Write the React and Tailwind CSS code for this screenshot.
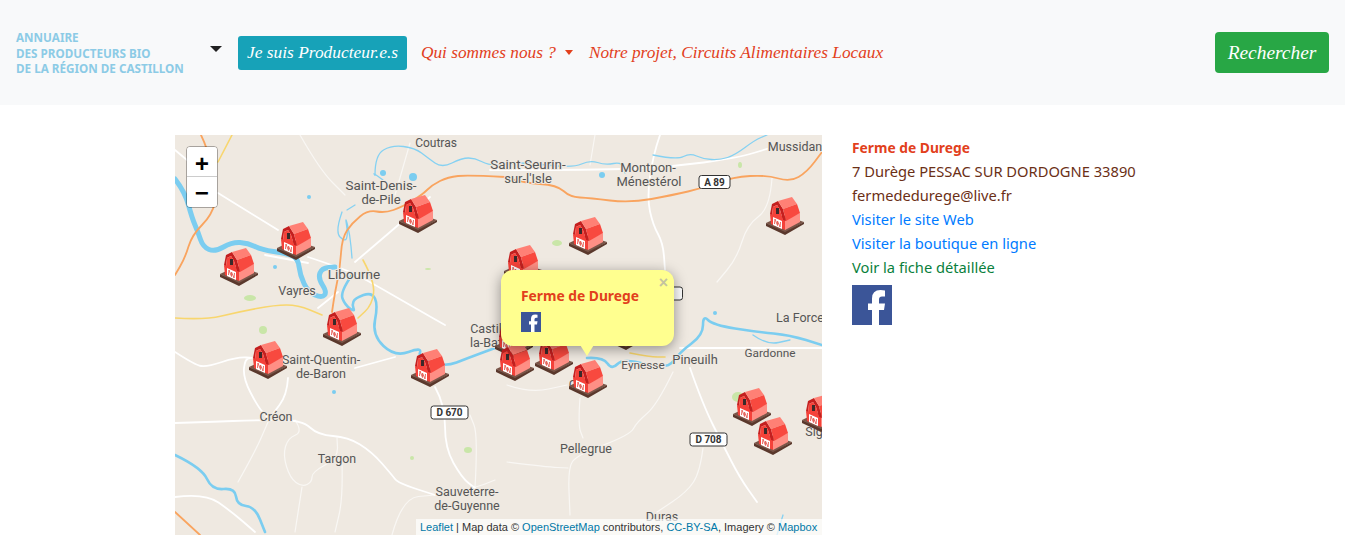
import React from "react";

const scriptFont = { fontFamily: '"Liberation Serif", serif' };

// rounds the corners of the hand-traced polylines
const smooth = (d) =>
  d
    .split("M")
    .filter((part) => part.trim())
    .map((part) => {
      const nums = part.match(/-?\d+(\.\d+)?/g).map(Number);
      const pts = [];
      for (let i = 0; i < nums.length; i += 2) pts.push([nums[i], nums[i + 1]]);
      if (pts.length < 3) return `M${pts[0]} L${pts[pts.length - 1]}`;
      let out = `M${pts[0][0]} ${pts[0][1]}`;
      for (let i = 1; i < pts.length - 1; i++) {
        const mx = (pts[i][0] + pts[i + 1][0]) / 2;
        const my = (pts[i][1] + pts[i + 1][1]) / 2;
        out += ` Q${pts[i][0]} ${pts[i][1]} ${mx} ${my}`;
      }
      const last = pts[pts.length - 1];
      return `${out} L${last[0]} ${last[1]}`;
    })
    .join(" ");

const riversThick = [
  "M0 44 L10 57 L17 83 L23 97 L28 112 L40 117 L57 107 L73 108 L87 115 L110 118 L123 123 L125 140 L133 157 L147 163 L152 157 L143 143 L147 133 L160 132",
];
const rivers = [
  "M177 140 L165 157 L170 170 L180 177 L177 170 L180 163 L197 157 L203 170 L197 200 L220 222 L247 212 L243 223 L270 232 L293 223 L320 213",
  "M412 223 L428 222 L437 235 L448 223 L492 235 L505 217 L528 200 L528 180 L538 190 L582 197 L615 200 L647 210",
  "M0 320 L27 333 L37 355 L60 353 L62 370 L80 372 L90 397",
];
const riversThin = [
  "M200 40 L200 20 L217 10 L240 13 L253 23 L267 33 L287 23 L300 23 L313 30 L330 30 L345 27 L398 33 L415 25 L430 30 L447 27 L450 38",
  "M478 20 L502 25 L515 18 L528 24 L545 25 L560 20 L580 5 L592 0",
  "M167 77 L160 97 L170 107 L173 100 L170 80 L175 100 L177 123",
  "M200 40 L197 37 L208 45 M172 75 L180 70",
  "M608 380 L602 400",
  "M578 200 L592 210 L615 205",
];
const lakes = [[238, 42, 4], [208, 38, 3], [100, 132, 2], [134, 62, 2], [427, 40, 3], [540, 178, 2], [159, 257, 2]];
const greens = [[75, 163, 6, 3], [88, 195, 4, 4], [253, 134, 3, 1], [382, 108, 5, 3], [293, 315, 4, 3], [237, 323, 2, 2], [565, 30, 2, 3], [563, 262, 6, 5]];
const orange = [
  "M26 0 L32 12 L43 55 L37 80 L17 100 L10 123 L0 140",
  "M330 42 L293 40 L273 42 L257 50 L247 60 L227 72 L210 78 L193 75 L177 88 L167 103 L165 133 L160 157 L157 177",
  "M330 42 L348 48 L382 50 L395 62 L415 63 L455 68 L498 60 L528 53 L558 42 L592 40 L615 47 L632 37 L647 17",
  "M0 377 L25 400",
];
const yellow = [
  "M57 0 L43 27",
  "M0 183 L30 185 L63 177 L100 170 L123 170 L147 180",
  "M188 125 L200 147 L197 170 L183 183",
  "M455 218 L475 222 L490 222",
];
const roads = [
  "M43 58 L103 95", "M180 127 L227 87 L255 62", "M133 122 L163 132 L183 140 L247 177 L270 190", "M143 173 L163 157",
  "M315 35 L428 35 L495 32 L562 23 L595 13", "M485 0 L478 20 L472 63 L478 90 L488 108 L490 135",
  "M0 217 L20 230 L32 232 L62 222 L80 223 L70 223 L68 243 L83 272 L93 283", "M113 243 L112 260 L97 280",
  "M0 288 L33 287 L83 285 L127 285 L143 300 L173 302 L197 317 L217 340 L223 348 L260 360",
  "M180 233 L220 222", "M260 252 L270 270 L270 313 L287 343 L300 353", "M0 362 L30 358 L57 377 L80 397",
  "M505 213 L647 213", "M515 233 L528 270 L548 310 L565 343 L582 367", "M0 15 L30 40", "M90 120 L133 128",
];
const roadsThin = [
  "M597 43 L595 73 L572 90 L562 123 L542 147", "M120 285 L128 297 L113 303 L108 320 L115 343 L127 352 L137 347 L137 337 L163 323 L162 303",
  "M127 352 L120 397", "M167 327 L168 363 L160 397", "M63 347 L80 317 L93 287", "M217 400 L227 363 L260 360",
  "M528 313 L525 337 L512 357 L482 377", "M498 237 L482 270 L462 287 L455 300 L402 320 L393 333 L395 380",
  "M405 263 L403 290 L408 303", "M332 327 L372 332 L393 333", "M332 250 L355 258 L392 250", "M260 360 L300 353 L320 345",
  "M300 353 L303 300 L295 280", "M420 0 L415 30", "M235 8 L220 60", "M125 0 L145 35 L170 60",
];
const labels = [
  ["Coutras", 261, 12, 12], ["Saint-Seurin-", 353, 34, 13.4], ["sur-l'Isle", 353, 48, 13], ["Saint-Denis-", 206, 55, 13.4], ["de-Pile", 206, 69, 13],
  ["Montpon-", 473, 37, 13], ["Ménestérol", 474, 51, 13], ["Mussidan", 620, 16, 12.5], ["Libourne", 179, 144, 13.5], ["Vayres", 122, 160, 12.5],
  ["Castil", 311, 198, 12.5], ["la-Bat", 311, 212, 12.5], ["La Force", 625, 187, 12.5], ["Gardonne", 595, 222, 11.8], ["Pineuilh", 520, 229, 12.8],
  ["Eynesse", 468, 234, 11.8], ["Saint-Quentin-", 146, 229, 12.5], ["de-Baron", 146, 243, 12.5], ["Créon", 101, 286, 12.5], ["Targon", 162, 328, 12.4],
  ["Pellegrue", 411, 318, 12.5], ["Sauveterre-", 292, 361, 12.5], ["de-Guyenne", 292, 375, 12.5], ["Duras", 487, 386, 12.5], ["Sig", 639, 301, 12.5], ["G", 398, 254, 12.5],
];
const signs = [["A 89", 539, 46.5, 31], ["D 670", 274, 277, 37], ["D 708", 533, 304, 37], ["", 499, 158, 16]];
const barns = [
  [224, 60], [102, 87], [45, 113], [394, 82], [591, 62], [329, 110], [148, 173], [320, 185], [74, 206], [432, 177],
  [236, 214], [321, 208], [360, 202], [394, 225], [558, 253], [627, 259], [579, 282],
];

const Barn = ({ x, y }) => (
  <g transform={`translate(${x} ${y})`}>
    <path d="M0 26 L17 18 L38 25 L19 36 Z" fill="#7a5548" />
    <path d="M0 26 L19 35 L38 25 L38 27 L19 38 L0 29 Z" fill="#5a382c" />
    <path d="M4 17 L5 27 L19 33 L19 22 Z" fill="#f4423a" />
    <path d="M19 23 L34 16 L34 25 L19 33 Z" fill="#ff8f85" />
    <path d="M4 17 L6 7 L12 4 L17 12 L20 24 L17 23 L14 13 L11 8 L7 10 L6 18 Z" fill="#c41f1f" />
    <path d="M6 18 L7 10 L11 8 L14 13 L17 23 L19 26 L4 18 Z" fill="#f4423a" />
    <path d="M12 4 L26 0 L31 7 L17 12 Z" fill="#ff8075" />
    <path d="M17 12 L31 7 L34 16 L20 24 Z" fill="#f8493f" />
    <rect x="10" y="11" width="3" height="6" fill="#3a2a2a" />
    <path d="M7 20 L16 24 L16 32 L7 28 Z" fill="#ffffff" />
    <path d="M8.5 27 L9 22 L11.5 28.5 L11.5 24 L14 30 L14.5 25" stroke="#e8685f" strokeWidth="1" fill="none" />
  </g>
);

const FacebookIcon = ({ size }) => (
  <svg width={size} height={size} viewBox="0 0 40 40" className="block">
    <rect width="40" height="40" fill="#3b5598" />
    <path d="M27 40 L27 25 L32 25 L33 18.5 L27 18.5 L27 14.5 Q27 11.5 30 11.5 L33 11.5 L33 5.5 Q31 5 28.5 5 Q20 5 20 13.5 L20 18.5 L16 18.5 L16 25 L20 25 L20 40 Z" fill="#ffffff" />
  </svg>
);

const MapDrawing = () => (
  <svg width="647" height="400" viewBox="0 0 647 400" className="block bg-[#efe9e1]">
    <g fill="none" strokeLinejoin="round" strokeLinecap="round">
      {roadsThin.map((d, i) => <path key={i} d={smooth(d)} stroke="#f9f7f4" strokeWidth="1.2" />)}
      {roads.map((d, i) => <path key={i} d={smooth(d)} stroke="#ffffff" strokeWidth="1.8" />)}
      {riversThin.map((d, i) => <path key={i} d={smooth(d)} stroke="#85d1f2" strokeWidth="1.3" />)}
      {rivers.map((d, i) => <path key={i} d={smooth(d)} stroke="#7bcdf0" strokeWidth="2.6" />)}
      {riversThick.map((d, i) => <path key={i} d={smooth(d)} stroke="#7bcdf0" strokeWidth="5" />)}
      {orange.map((d, i) => <path key={i} d={smooth(d)} stroke="#f9a45f" strokeWidth="1.8" />)}
      {yellow.map((d, i) => <path key={i} d={smooth(d)} stroke="#f8d66e" strokeWidth="1.6" />)}
    </g>
    {lakes.map(([x, y, r], i) => <circle key={i} cx={x} cy={y} r={r} fill="#7bcdf0" />)}
    {greens.map(([x, y, rx, ry], i) => <ellipse key={i} cx={x} cy={y} rx={rx} ry={ry} fill="#c9e6a8" />)}
    {labels.map(([text, x, y, size]) => (
      <text
        key={text}
        x={x}
        y={y}
        textAnchor="middle"
        fontSize={size}
        fill="#555555"
        stroke="#efe9e1"
        strokeWidth="2"
        paintOrder="stroke"
        fontFamily="Roboto, sans-serif"
      >
        {text}
      </text>
    ))}
    {signs.map(([text, x, y, w]) => (
      <g key={x}>
        <rect x={x - w / 2 + 0.5} y={y - 6} width={w} height="13" rx="2.5" fill="#ffffff" stroke="#333333" />
        <text x={x + 0.5} y={y + 4} textAnchor="middle" fontSize="10" fontWeight="700" fill="#333333" fontFamily="Roboto, sans-serif">
          {text}
        </text>
      </g>
    ))}
    {barns.map(([x, y], i) => <Barn key={i} x={x} y={y} />)}
  </svg>
);

export default function App() {
  return (
    <div className="min-h-[552px] bg-white font-['Noto_Sans',sans-serif]">
      {/* === Navbar === */}
      <nav className="h-[105px] bg-[#f8f9fa] flex items-center pl-[16px] pr-[16px]">
        <div className="w-[168px] mt-[2px] text-[#8ccbe6] text-[11.7px] leading-[15.5px] font-bold uppercase whitespace-nowrap">
          <div>Annuaire</div>
          <div>Des producteurs bio</div>
          <div>De la région de Castillon</div>
        </div>
        <span className="ml-[26px] mb-[8px] w-0 h-0 border-x-[6px] border-x-transparent border-t-[6px] border-t-[#212121]" />
        <button style={scriptFont} className="ml-[16px] h-[34px] w-[169px] rounded-[3px] bg-[#17a2b8] text-white text-[17.4px] italic whitespace-nowrap">
          Je suis Producteur.e.s
        </button>
        <div style={scriptFont} className="ml-[14px] flex items-center text-[#e2401c] text-[17.3px] italic whitespace-nowrap">
          <span>Qui sommes nous ?</span>
          <span className="ml-[9px] w-0 h-0 border-x-[4px] border-x-transparent border-t-[5px] border-t-[#e2401c]" />
          <span className="ml-[16px]">Notre projet, Circuits Alimentaires Locaux</span>
        </div>
        <button style={scriptFont} className="ml-auto h-[41px] w-[114px] rounded-[4px] bg-[#28a745] text-white text-[19.4px] italic">
          Rechercher
        </button>
      </nav>

      {/* === Map and details === */}
      <main className="pt-[30px] pl-[175px] flex gap-[30px]">
        <div className="relative w-[647px] h-[400px] overflow-hidden">
          <MapDrawing />

          <div className="absolute left-[11px] top-[11px] w-[32px] rounded-[4px] border border-black/30 bg-clip-padding">
            <div className="h-[30px] pt-[8px] bg-white rounded-t-[3px] border-b border-[#cccccc] flex items-center justify-center text-[24px] font-bold text-black font-['Liberation_Mono',monospace]">+</div>
            <div className="h-[30px] pt-[6px] bg-white rounded-b-[3px] flex items-center justify-center text-[24px] font-bold text-black font-['Liberation_Mono',monospace]">−</div>
          </div>

          <div className="absolute left-[326px] top-[135px] w-[173px] h-[76px] rounded-[12px] bg-[#ffff8f] shadow-[0_3px_14px_rgba(0,0,0,0.4)] pl-[20px] pt-[16px]">
            <div className="text-[13.8px] leading-[20px] font-bold text-[#e2401c]">Ferme de Durege</div>
            <div className="mt-[6px]"><FacebookIcon size={20} /></div>
            <span className="absolute right-[6px] top-[4px] text-[#c3c3a0] text-[16px] leading-[18px] font-bold font-['Liberation_Sans',sans-serif]">×</span>
            <span className="absolute left-[76px] top-[70px] w-[20px] h-[16px] [clip-path:polygon(0_0,100%_0,50%_100%)] bg-[#ffff8f]" />
          </div>

          <div className="absolute right-0 bottom-0 h-[16px] w-[406px] pl-[4px] bg-white/70 text-[11px] leading-[16px] text-[#333333] whitespace-nowrap overflow-hidden font-['Liberation_Sans',sans-serif]">
            <span className="text-[#0078a8]">Leaflet</span> | Map data © <span className="text-[#0078a8]">OpenStreetMap</span> contributors, <span className="text-[#0078a8]">CC-BY-SA</span>, Imagery © <span className="text-[#0078a8]">Mapbox</span>
          </div>
        </div>

        <div className="text-[14.7px] leading-[24px] whitespace-nowrap">
          <div className="pt-[1px] h-[24px] font-bold text-[13.8px] text-[#e2401c]">Ferme de Durege</div>
          <div className="text-[#6b2f16]">7 Durège PESSAC SUR DORDOGNE 33890</div>
          <div className="text-[#6b2f16]">fermededurege@live.fr</div>
          <div className="text-[#007bff]">Visiter le site Web</div>
          <div className="text-[#007bff]">Visiter la boutique en ligne</div>
          <div className="text-[#0a7f3c]">Voir la fiche détaillée</div>
          <div className="mt-[6px]"><FacebookIcon size={40} /></div>
        </div>
      </main>
    </div>
  );
}
